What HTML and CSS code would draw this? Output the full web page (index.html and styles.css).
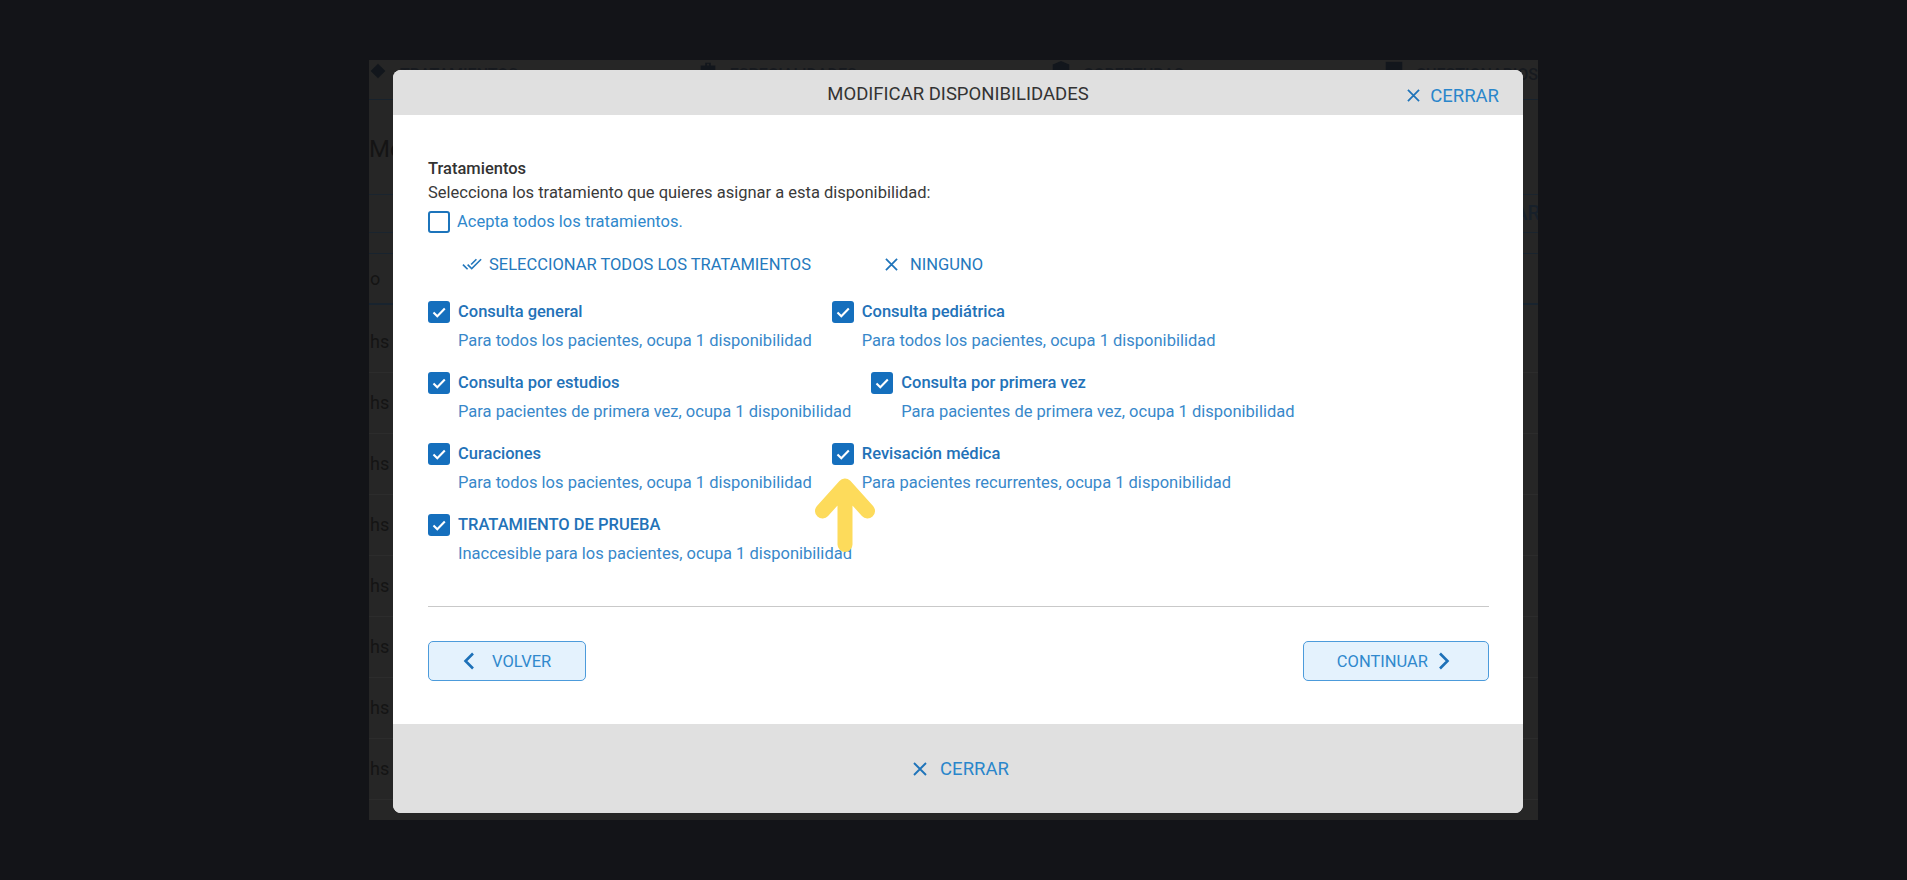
FILE: index.html
```html
<!DOCTYPE html>
<html lang="es">
<head>
    <meta charset="UTF-8">
    <meta name="viewport" content="width=device-width, initial-scale=1.0">
    <title>Modificar disponibilidades</title>
    <link rel="stylesheet" href="styles.css">
</head>
<body>
    <div class="app">
        <!-- pantalla de fondo, oscurecida por el modal -->
        <div class="app-nav">
            <div class="nav-item nav-1">
                <svg class="nav-icon" viewBox="0 0 24 24"><path d="M4 12l8-8 8 8-8 8z"/></svg>
                <span>TRATAMIENTOS</span>
            </div>
            <div class="nav-item nav-2">
                <svg class="nav-icon" viewBox="0 0 24 24"><path d="M9 3h6v3h5v15H4V6h5zm2 1v2h2V4z"/></svg>
                <span>ESPECIALIDADES</span>
            </div>
            <div class="nav-item nav-3">
                <svg class="nav-icon" viewBox="0 0 24 24"><path d="M12 1l9 4v6c0 6-4 10-9 12-5-2-9-6-9-12V5z"/></svg>
                <span>COBERTURAS</span>
            </div>
            <div class="nav-item nav-4">
                <svg class="nav-icon" viewBox="0 0 24 24"><path d="M3 2h18v20H3z"/></svg>
                <span>CUESTIONARIOS</span>
            </div>
        </div>
        <div class="app-title">Me</div>
        <div class="app-toolbar">
            <span class="app-tool">EXPORTAR</span>
        </div>
        <div class="app-table">
            <div class="app-head">o</div>
            <div class="app-row">hs</div>
            <div class="app-row">hs</div>
            <div class="app-row">hs</div>
            <div class="app-row">hs</div>
            <div class="app-row">hs</div>
            <div class="app-row">hs</div>
            <div class="app-row">hs</div>
            <div class="app-row">hs</div>
        </div>

        <div class="modal">
            <div class="modal-header">
                <span></span>
                <span class="modal-title">MODIFICAR DISPONIBILIDADES</span>
                <button class="close-btn">
                    <svg class="x-icon" viewBox="0 0 14 14"><path d="M1 1L13 13M13 1L1 13"/></svg>
                    CERRAR
                </button>
            </div>

            <div class="modal-body">
                <div class="section-label">Tratamientos</div>
                <div class="hint">Selecciona los tratamiento que quieres asignar a esta disponibilidad:</div>
                <div class="accept-row">
                    <span class="cb cb-empty"></span>
                    <span>Acepta todos los tratamientos.</span>
                </div>

                <div class="actions">
                    <button class="link-btn">
                        <svg class="all-icon" viewBox="0 0 24 24"><path d="M18 7l-1.41-1.41-6.34 6.34 1.41 1.41L18 7zm4.24-1.41L11.66 16.17 7.48 12l-1.41 1.41L11.66 19l12-12-1.42-1.41zM.41 13.41L6 19l1.41-1.41L1.83 12 .41 13.41z"/></svg>
                        SELECCIONAR TODOS LOS TRATAMIENTOS
                    </button>
                    <button class="link-btn none-btn">
                        <svg class="x-icon" viewBox="0 0 14 14"><path d="M1 1L13 13M13 1L1 13"/></svg>
                        NINGUNO
                    </button>
                </div>

                <div class="treat-list">
                    <div class="treat">
                        <div class="treat-head">
                            <span class="cb"><svg viewBox="0 0 22 22"><path d="M5.5 11.5l3.8 3.8L16.8 7.5"/></svg></span>
                            <span class="treat-name">Consulta general</span>
                        </div>
                        <div class="treat-desc">Para todos los pacientes, ocupa 1 disponibilidad</div>
                    </div>
                    <div class="treat">
                        <div class="treat-head">
                            <span class="cb"><svg viewBox="0 0 22 22"><path d="M5.5 11.5l3.8 3.8L16.8 7.5"/></svg></span>
                            <span class="treat-name">Consulta pediátrica</span>
                        </div>
                        <div class="treat-desc">Para todos los pacientes, ocupa 1 disponibilidad</div>
                    </div>
                    <div class="treat">
                        <div class="treat-head">
                            <span class="cb"><svg viewBox="0 0 22 22"><path d="M5.5 11.5l3.8 3.8L16.8 7.5"/></svg></span>
                            <span class="treat-name">Consulta por estudios</span>
                        </div>
                        <div class="treat-desc">Para pacientes de primera vez, ocupa 1 disponibilidad</div>
                    </div>
                    <div class="treat">
                        <div class="treat-head">
                            <span class="cb"><svg viewBox="0 0 22 22"><path d="M5.5 11.5l3.8 3.8L16.8 7.5"/></svg></span>
                            <span class="treat-name">Consulta por primera vez</span>
                        </div>
                        <div class="treat-desc">Para pacientes de primera vez, ocupa 1 disponibilidad</div>
                    </div>
                    <div class="treat">
                        <div class="treat-head">
                            <span class="cb"><svg viewBox="0 0 22 22"><path d="M5.5 11.5l3.8 3.8L16.8 7.5"/></svg></span>
                            <span class="treat-name">Curaciones</span>
                        </div>
                        <div class="treat-desc">Para todos los pacientes, ocupa 1 disponibilidad</div>
                    </div>
                    <div class="treat">
                        <div class="treat-head">
                            <span class="cb"><svg viewBox="0 0 22 22"><path d="M5.5 11.5l3.8 3.8L16.8 7.5"/></svg></span>
                            <span class="treat-name">Revisación médica</span>
                        </div>
                        <div class="treat-desc">Para pacientes recurrentes, ocupa 1 disponibilidad</div>
                    </div>
                    <div class="treat">
                        <div class="treat-head">
                            <span class="cb"><svg viewBox="0 0 22 22"><path d="M5.5 11.5l3.8 3.8L16.8 7.5"/></svg></span>
                            <span class="treat-name">TRATAMIENTO DE PRUEBA</span>
                        </div>
                        <div class="treat-desc">Inaccesible para los pacientes, ocupa 1 disponibilidad</div>
                    </div>
                </div>

                <div class="divider"></div>

                <div class="step-btns">
                    <button class="step-btn back-btn">
                        <svg class="chev" viewBox="0 0 12 18"><path d="M10 1.5L2.5 9l7.5 7.5"/></svg>
                        VOLVER
                    </button>
                    <button class="step-btn next-btn">
                        CONTINUAR
                        <svg class="chev" viewBox="0 0 12 18"><path d="M2 1.5L9.5 9 2 16.5"/></svg>
                    </button>
                </div>
            </div>

            <div class="modal-footer">
                <button class="close-btn footer-close">
                    <svg class="x-icon" viewBox="0 0 14 14"><path d="M1 1L13 13M13 1L1 13"/></svg>
                    CERRAR
                </button>
            </div>
        </div>

        <!-- flecha de anotación -->
        <svg class="arrow" viewBox="0 0 60 75"><path d="M30 66.5V9M7.5 33L30 8l22.5 25"/></svg>
    </div>
</body>
</html>
```

FILE: styles.css
```css
body {
    margin: 0;
    background-color: #131418;
    font-family: Roboto, "Liberation Sans", Arial, sans-serif;
}
button {
    font-family: inherit;
    border: none;
    background: none;
    padding: 0;
    cursor: pointer;
}

/* pantalla de fondo */
.app {
    position: relative;
    margin: 60px 0 0 369px;
    width: 1169px;
    height: 760px;
    overflow: hidden;
    background-color: #262626;
    color: #141414;
}
.app-nav {
    display: flex;
    height: 39px;
    border-bottom: 1px solid #18222c;
}
.nav-item {
    display: flex;
    align-items: flex-start;
    gap: 11px;
    font-size: 16px;
    font-weight: 500;
    color: #171a1f;
}
.nav-item span {
    padding-top: 4px;
    line-height: 22px;
}
.nav-icon {
    width: 22px;
    height: 22px;
    fill: #12161c;
}
.nav-1 { width: 337px; margin-left: -2px; }
.nav-2 { width: 361px; }
.nav-3 { width: 340px; }
.app-title {
    margin-top: 29px;
    font-size: 24px;
    line-height: 40px;
}
.app-toolbar {
    display: flex;
    justify-content: flex-end;
    margin-top: 25px;
    height: 37px;
    border-top: 1px solid #1a242e;
    border-bottom: 1px solid #1a242e;
}
.app-tool {
    margin-right: -2px;
    font-size: 20px;
    font-weight: 500;
    line-height: 37px;
    color: #17202a;
}
.app-table {
    margin-top: 20px;
}
.app-head {
    height: 49px;
    line-height: 49px;
    border-top: 1px solid #18232e;
    border-bottom: 2px solid #18232e;
    font-size: 18px;
}
.app-head, .app-row {
    padding-left: 1px;
}
.app-row {
    height: 60px;
    line-height: 60px;
    border-bottom: 1px solid #2c2c2c;
    font-size: 18px;
}
.app-head + .app-row {
    margin-top: 7px;
}

/* modal */
.modal {
    position: absolute;
    left: 24px;
    top: 10px;
    width: 1130px;
    height: 743px;
    display: flex;
    flex-direction: column;
    background-color: #fff;
    border-radius: 8px;
    overflow: hidden;
}
.modal-header {
    flex-shrink: 0;
    height: 45px;
    display: grid;
    grid-template-columns: 1fr auto 1fr;
    align-items: center;
    padding: 0 24px;
    background-color: #e0e0e0;
}
.modal-title {
    padding-top: 3px;
    font-size: 18.5px;
    color: #333;
}
.close-btn {
    display: inline-flex;
    align-items: center;
    gap: 10px;
    font-size: 18.5px;
    color: #2a86cb;
}
.modal-header .close-btn {
    justify-self: end;
    margin-top: 6px;
}
.x-icon {
    width: 13px;
    height: 13px;
    fill: none;
    stroke: #1f74ba;
    stroke-width: 1.9;
}
.modal-body {
    flex: 1;
    padding: 42px 34px 0 35px;
    font-size: 16.5px;
    line-height: 24px;
}
.section-label {
    font-weight: 500;
    color: #333;
}
.hint {
    color: #3a3a3a;
}
.accept-row {
    display: flex;
    align-items: center;
    gap: 7px;
    height: 24px;
    margin-top: 5px;
    color: #2f88cc;
}
.cb {
    flex-shrink: 0;
    width: 22px;
    height: 22px;
    border-radius: 3px;
    background-color: #156fbd;
    box-sizing: border-box;
}
.cb svg {
    display: block;
    width: 22px;
    height: 22px;
    fill: none;
    stroke: #fff;
    stroke-width: 2.1;
}
.cb-empty {
    background-color: #fff;
    border: 2px solid #1c74bb;
}
.actions {
    display: flex;
    align-items: center;
    gap: 74px;
    height: 36px;
    margin-top: 12px;
    padding-left: 34px;
}
.link-btn {
    display: inline-flex;
    align-items: center;
    gap: 7px;
    font-size: 16.5px;
    color: #2579bd;
}
.none-btn {
    gap: 12px;
}
.all-icon {
    width: 20px;
    height: 20px;
    fill: #2579bd;
}
.treat-list {
    display: flex;
    flex-wrap: wrap;
    column-gap: 20px;
    row-gap: 18px;
    margin-top: 18px;
}
.treat-head {
    display: flex;
    align-items: center;
    gap: 8px;
    height: 24px;
}
.treat-name {
    font-weight: 500;
    color: #2372b8;
}
.treat-desc {
    margin-top: 5px;
    padding-left: 30px;
    color: #3888ca;
}
.divider {
    margin-top: 40px;
    height: 1px;
    background-color: #c9c9c9;
}
.step-btns {
    display: flex;
    justify-content: space-between;
    margin-top: 34px;
}
.step-btn {
    display: inline-flex;
    align-items: center;
    height: 40px;
    box-sizing: border-box;
    border: 1px solid #4c9bdb;
    border-radius: 5px;
    background-color: #e4f2fd;
    font-size: 16.5px;
    color: #3089cd;
}
.back-btn {
    gap: 17px;
    padding: 0 34px;
}
.next-btn {
    gap: 10px;
    padding: 0 38px 0 33px;
}
.chev {
    width: 12px;
    height: 18px;
    fill: none;
    stroke: #1d71b8;
    stroke-width: 2.6;
}
.modal-footer {
    flex-shrink: 0;
    height: 89px;
    display: flex;
    align-items: center;
    justify-content: center;
    padding-left: 6px;
    background-color: #e0e0e0;
}
.footer-close {
    gap: 13px;
}
.footer-close .x-icon {
    width: 14px;
    height: 14px;
}

/* flecha amarilla */
.arrow {
    position: absolute;
    left: 446px;
    top: 418px;
    width: 60px;
    height: 75px;
    fill: none;
    stroke: #fddb5b;
    stroke-width: 15;
    stroke-linecap: round;
    stroke-linejoin: round;
}
```
